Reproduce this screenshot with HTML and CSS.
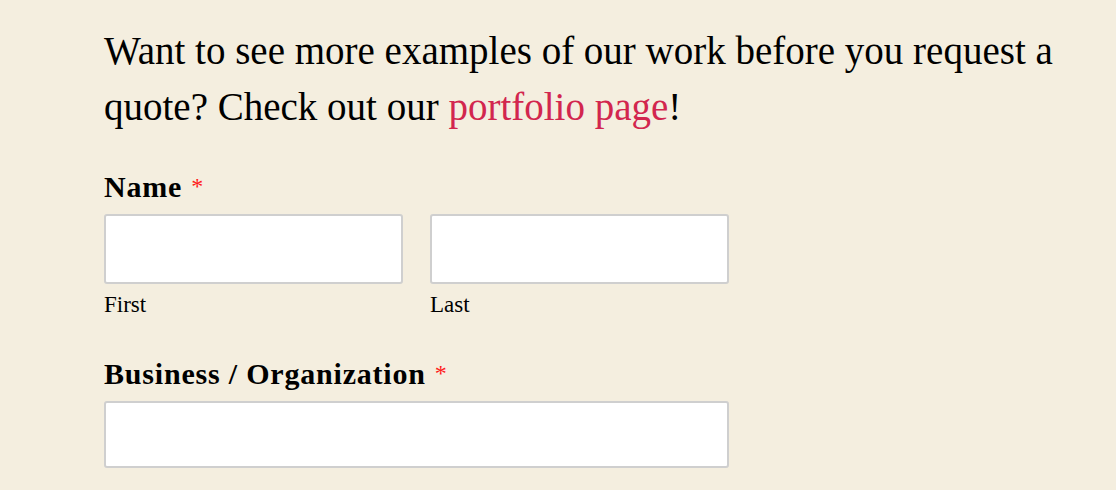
FILE: index.html
```html
<html>
<head>
    <title>Request a Quote</title>
    <link rel="stylesheet" href="styles.css">
</head>
<body>
  <div class="page">
    <p class="intro">Want to see more examples of our work before you request a quote? Check out our <a href="#">portfolio page</a>!</p>
    <form class="quote-form">
      <div class="field">
        <label class="field-label">Name<span class="required">*</span></label>
        <div class="name-row">
          <div class="name-part">
            <input type="text" name="first-name">
            <span class="sublabel">First</span>
          </div>
          <div class="name-part">
            <input type="text" name="last-name">
            <span class="sublabel">Last</span>
          </div>
        </div>
      </div>
      <div class="field">
        <label class="field-label">Business / Organization<span class="required">*</span></label>
        <input type="text" name="business" class="wide">
      </div>
    </form>
  </div>
</body>
</html>
```

FILE: styles.css
```css
body {
  margin: 0;
  background-color: #F4EEDF;
  color: #000;
  font-family: "Liberation Serif", "Times New Roman", serif;
}

.page {
  padding: 23px 0 0 104px;
  width: 958px;
}

.intro {
  margin: 0 0 34px;
  font-size: 39px;
  line-height: 56px;
}

.intro a {
  color: #D2264E;
  text-decoration: none;
}

.field {
  margin-bottom: 38px;
}

.field-label {
  display: block;
  font-size: 30px;
  line-height: 34px;
  letter-spacing: 0.8px;
  font-weight: bold;
  margin-bottom: 10px;
}

.required {
  color: #FF1A1A;
  font-weight: normal;
  font-size: 24px;
  margin-left: 9px;
  vertical-align: 3px;
}

.name-row {
  display: flex;
  gap: 27px;
}

.name-part {
  display: flex;
  flex-direction: column;
}

.sublabel {
  font-size: 23px;
  line-height: 26px;
  margin-top: 8px;
}

input[type="text"] {
  width: 299px;
  height: 70px;
  box-sizing: border-box;
  background-color: #FFF;
  border: 2px solid #CFCFCF;
  border-radius: 3px;
}

input.wide {
  width: 625px;
  height: 67px;
}
```
